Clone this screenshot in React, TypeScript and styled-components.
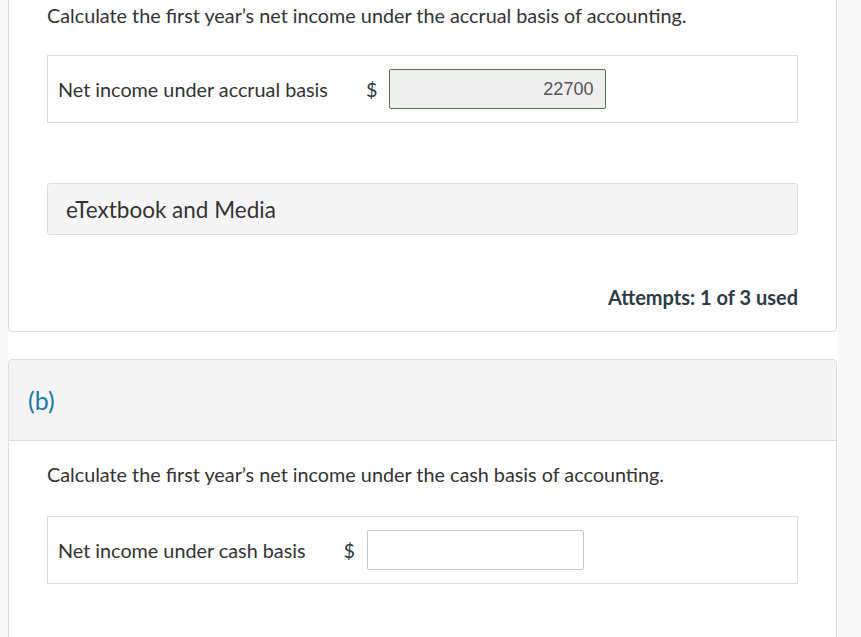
import React, {FC} from 'react';
import styled, {createGlobalStyle} from 'styled-components';

const GlobalStyle = createGlobalStyle`
  html, body {
    margin: 0;
    padding: 0;
    background: #f8f8f8;
    font-family: Lato, "Open Sans", sans-serif;
    color: #333;
  }

  * {
    box-sizing: border-box;
  }
`

type AnswerRowType = {
    label: string
    value?: string
    checked?: boolean
}

const AnswerRow: FC<AnswerRowType> = ({label, value, checked}) => {
    return <AnswerBox $tight={checked}>
        <AnswerLabel>{label}</AnswerLabel>
        <Currency>$</Currency>
        <AnswerInput readOnly value={value ?? ''} $checked={checked}/>
    </AnswerBox>
}

const App: FC = () => {
    return <>
        <GlobalStyle/>
        <Page>
            <Card $first>
                <Question>Calculate the first year’s net income under the accrual basis of accounting.</Question>
                <AnswerRow label='Net income under accrual basis' value='22700' checked/>
                <MediaBar>eTextbook and Media</MediaBar>
                <Attempts>Attempts: 1 of 3 used</Attempts>
            </Card>

            <Card>
                <PartHeader>(b)</PartHeader>
                <PartBody>
                    <Question>Calculate the first year’s net income under the cash basis of accounting.</Question>
                    <AnswerRow label='Net income under cash basis'/>
                </PartBody>
            </Card>
        </Page>
    </>
};
export default App;

const Page = styled.div`
  margin-left: 8px;
  width: 830px;
  height: 637px;
  background: #fff;
  overflow: hidden;
`

const Card = styled.section<{ $first?: boolean }>`
  width: 829px;
  border: 1px solid #dcdcdc;
  border-radius: 4px;
  background: #fff;
  margin-top: ${p => p.$first ? '-20px' : '27px'};
  padding: ${p => p.$first ? '22px 38px 21px' : '0'};
  min-height: ${p => p.$first ? 'auto' : '320px'};
`

const Question = styled.p`
  margin: 0;
  font-size: 19.8px;
  line-height: 25px;
  color: #333;
`

const AnswerBox = styled.div<{ $tight?: boolean }>`
  display: flex;
  align-items: center;
  margin-top: ${p => p.$tight ? '27px' : '29px'};
  height: 68px;
  padding: 0 10px;
  border: 1px solid #dcdcdc;
`

const AnswerLabel = styled.span`
  font-size: 19.8px;
  color: #333;
  margin-right: 38px;
`

const Currency = styled.span`
  font-size: 19.8px;
  color: #2d3b45;
  margin-right: 12px;
`

const AnswerInput = styled.input<{ $checked?: boolean }>`
  width: 217px;
  height: 40px;
  padding: 0 12px;
  border: 1px solid ${p => p.$checked ? '#4a7c4a' : '#c8c8c8'};
  border-radius: 2px;
  background: ${p => p.$checked ? '#eeeeee' : '#fff'};
  font-family: "Liberation Sans", Arial, sans-serif;
  font-size: 18px;
  color: #555;
  text-align: right;
  outline: none;
`

const MediaBar = styled.div`
  margin-top: 60px;
  height: 52px;
  display: flex;
  align-items: center;
  padding-left: 18px;
  background: #f5f5f5;
  border: 1px solid #dcdcdc;
  border-radius: 3px;
  font-size: 22.5px;
  color: #333;
`

const Attempts = styled.div`
  margin-top: 50px;
  text-align: right;
  font-size: 20px;
  line-height: 25px;
  font-weight: 700;
  color: #2d3b45;
`

const PartHeader = styled.div`
  height: 81px;
  display: flex;
  align-items: center;
  padding-left: 19px;
  background: #f4f4f4;
  border-bottom: 1px solid #dcdcdc;
  border-radius: 4px 4px 0 0;
  font-size: 25px;
  color: #1a79a6;
`

const PartBody = styled.div`
  padding: 21px 38px 0;
`
